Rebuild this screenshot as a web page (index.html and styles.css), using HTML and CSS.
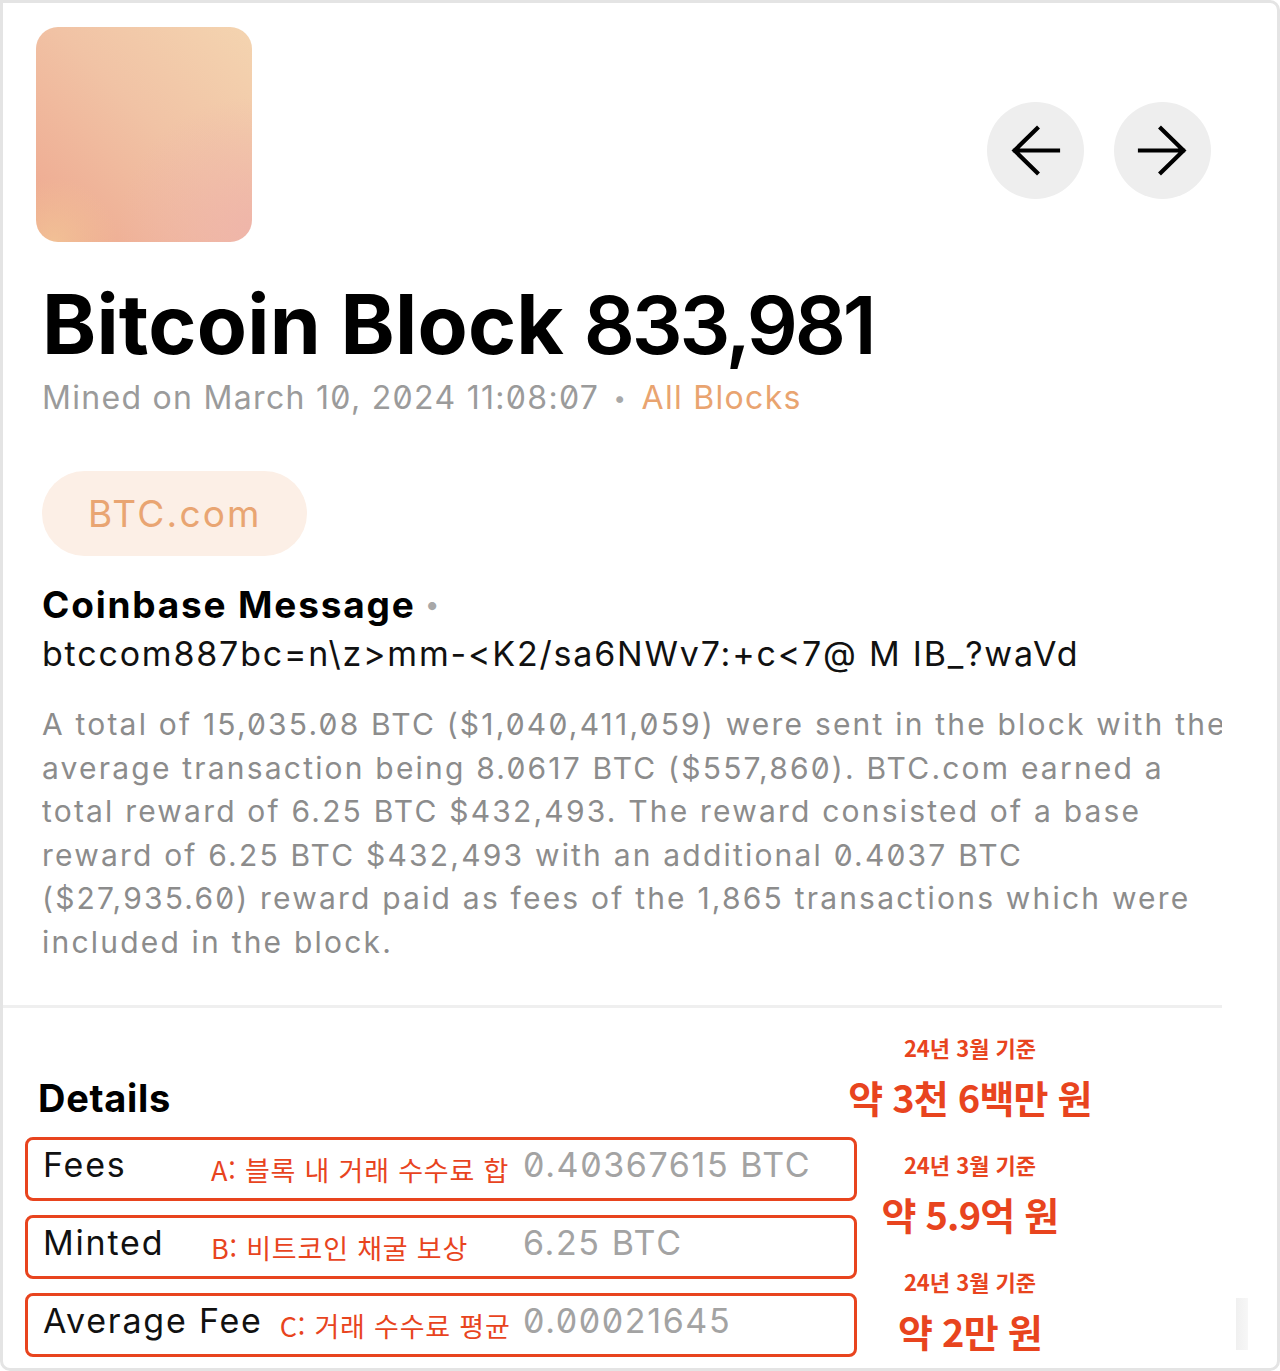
FILE: index.html
```html
<!DOCTYPE html>
<html lang="ko">
<head>
<meta charset="utf-8">
<title>Bitcoin Block 833,981</title>
<link rel="stylesheet" href="styles.css">
</head>
<body>
<div class="frame">
  <div class="top">
    <div class="block-art"></div>
    <div class="nav">
      <button class="nav-btn" aria-label="Previous block">
        <svg viewBox="0 0 97 97" width="97" height="97"><path d="M71 48.5H28M50 26.5L27.5 48.5L50 70.5" fill="none" stroke="#000" stroke-width="4.2" stroke-linecap="square" stroke-linejoin="miter"/></svg>
      </button>
      <button class="nav-btn" aria-label="Next block">
        <svg viewBox="0 0 97 97" width="97" height="97"><path d="M26 48.5H69M47 26.5L69.5 48.5L47 70.5" fill="none" stroke="#000" stroke-width="4.2" stroke-linecap="square" stroke-linejoin="miter"/></svg>
      </button>
    </div>
  </div>

  <div class="main">
    <h1 class="title">Bitcoin Block <span class="num">833,981</span></h1>
    <div class="sub">Mined on March 10, 2024 11:08:07 <span class="dot">•</span> <span class="link">All Blocks</span></div>

    <div class="pill">BTC.com</div>

    <h2 class="cb-title">Coinbase Message <span class="cb-dot">•</span></h2>
    <div class="cb-msg">btccom887bc=n\z&gt;mm-&lt;K2/sa6NWv7:+c&lt;7@ M IB_?waVd</div>

    <p class="summary">A total of 15,035.08 BTC ($1,040,411,059) were sent in the block with the<br>average transaction being 8.0617 BTC ($557,860). BTC.com earned a<br>total reward of 6.25 BTC $432,493. The reward consisted of a base<br>reward of 6.25 BTC $432,493 with an additional 0.4037 BTC<br>($27,935.60) reward paid as fees of the 1,865 transactions which were<br>included in the block.</p>
  </div>

  <div class="divider"></div>

  <div class="bottom">
    <div class="details">
      <h3 class="details-title">Details</h3>
      <div class="rows">
        <div class="row">
          <span class="label">Fees</span>
          <span class="note">A: 블록 내 거래 수수료 합</span>
          <span class="value">0.40367615 BTC</span>
        </div>
        <div class="row">
          <span class="label">Minted</span>
          <span class="note">B: 비트코인 채굴 보상</span>
          <span class="value">6.25 BTC</span>
        </div>
        <div class="row">
          <span class="label">Average Fee</span>
          <span class="note">C: 거래 수수료 평균</span>
          <span class="value">0.00021645</span>
        </div>
      </div>
    </div>
    <div class="krw">
      <div class="krw-group">
        <div class="krw-date">24년 3월 기준</div>
        <div class="krw-amount">약 3천 6백만 원</div>
      </div>
      <div class="krw-group">
        <div class="krw-date">24년 3월 기준</div>
        <div class="krw-amount">약 5.9억 원</div>
      </div>
      <div class="krw-group">
        <div class="krw-date">24년 3월 기준</div>
        <div class="krw-amount">약 2만 원</div>
      </div>
    </div>
    <div class="scroll-stub"></div>
  </div>
</div>
</body>
</html>
```

FILE: styles.css
```css
html, body {
  margin: 0;
  padding: 0;
  background: #ffffff;
}

body {
  font-family: Inter, "Noto Sans", "Noto Sans CJK KR", sans-serif;
  font-feature-settings: "zero" 1;
  color: #000;
}

.frame {
  width: 1280px;
  height: 1371px;
  box-sizing: border-box;
  border: 3px solid #e4e4e4;
  border-radius: 0 10px 10px 10px;
  overflow: hidden;
  background: #fff;
}

/* top row */
.top {
  display: flex;
  justify-content: space-between;
  align-items: flex-start;
  margin-top: 24px;
  padding-left: 33px;
  padding-right: 66px;
}

.block-art {
  width: 216px;
  height: 215px;
  border-radius: 22px;
  background:
    radial-gradient(circle at 8% 100%, rgba(242, 196, 150, 0.85) 0, rgba(242, 196, 150, 0) 22%),
    radial-gradient(circle at 100% 95%, rgba(239, 180, 170, 0.9) 0, rgba(239, 180, 170, 0) 45%),
    linear-gradient(225deg, #f4d4b0 0%, #f1c3a5 45%, #eea78f 100%);
}

.nav {
  display: flex;
  gap: 30px;
  margin-top: 75px;
}

.nav-btn {
  width: 97px;
  height: 97px;
  border: 0;
  padding: 0;
  border-radius: 50%;
  background: #eeeeee;
  display: flex;
  align-items: center;
  justify-content: center;
}

.nav-btn svg {
  display: block;
}

/* main text */
.main {
  padding-left: 39px;
}

.title {
  margin: 42px 0 0;
  font-size: 82px;
  line-height: 82px;
  font-weight: 700;
  letter-spacing: 0.2px;
  white-space: nowrap;
}

.title .num {
  font-size: 80px;
  font-weight: 600;
  letter-spacing: -3.2px;
}

.sub {
  margin-top: 14px;
  font-size: 32px;
  line-height: 36px;
  color: #9b9b9b;
  letter-spacing: 1.3px;
  white-space: nowrap;
}

.sub .dot {
  color: #a8a8a8;
  font-size: 22px;
  margin: 0 4px;
  vertical-align: 3px;
}

.sub .link {
  color: #e9a470;
}

.pill {
  display: inline-flex;
  align-items: center;
  box-sizing: border-box;
  height: 85px;
  margin-top: 55px;
  padding: 0 45px 0 46px;
  border-radius: 43px;
  background: #fcefe6;
  color: #e9a572;
  font-size: 37px;
  line-height: 44px;
  letter-spacing: 2.2px;
}

.cb-title {
  margin: 27px 0 0;
  font-size: 37px;
  line-height: 44px;
  font-weight: 700;
  letter-spacing: 1.8px;
}

.cb-dot {
  color: #a8a8a8;
  font-size: 26px;
  vertical-align: 4px;
}

.cb-msg {
  margin-top: 5px;
  font-size: 34px;
  line-height: 44px;
  color: #111;
  letter-spacing: 1.8px;
  white-space: nowrap;
}

.summary {
  margin: 27px 0 0;
  width: 1180px;
  overflow: hidden;
  white-space: nowrap;
  font-size: 30px;
  line-height: 43.5px;
  color: #8c8c8c;
  letter-spacing: 2.2px;
}

.divider {
  margin-top: 41px;
  width: 1219px;
  height: 3px;
  background: #efefef;
}

/* bottom */
.bottom {
  display: flex;
  align-items: flex-start;
}

.details {
  width: 832px;
  margin-left: 22px;
}

.details-title {
  margin: 67px 0 0 13px;
  font-size: 38px;
  line-height: 46px;
  font-weight: 700;
  letter-spacing: 0.7px;
}

.rows {
  margin-top: 16px;
  display: flex;
  flex-direction: column;
  gap: 14px;
}

.row {
  display: flex;
  align-items: center;
  box-sizing: border-box;
  height: 64px;
  border: 3.5px solid #e8441e;
  border-radius: 8px;
  padding-left: 15px;
}

.label {
  min-width: 151px;
  margin-right: 17px;
  margin-bottom: 8px;
  font-size: 34px;
  line-height: 40px;
  color: #111;
  letter-spacing: 1.8px;
  white-space: nowrap;
}

.note {
  flex: 1;
  font-family: "Noto Sans CJK KR", sans-serif;
  font-size: 27px;
  color: #e8441e;
  white-space: nowrap;
  letter-spacing: 0.8px;
}

.value {
  width: 331px;
  margin-bottom: 8px;
  font-size: 34px;
  line-height: 40px;
  color: #a3a3a3;
  letter-spacing: 1.6px;
  white-space: nowrap;
}

.krw {
  width: 220px;
  margin-left: 3px;
  margin-top: 28px;
  display: flex;
  flex-direction: column;
  gap: 37px;
  text-align: center;
  color: #e8441e;
  font-family: "Noto Sans CJK KR", sans-serif;
  font-weight: 700;
}

.krw-group {
  display: flex;
  flex-direction: column;
  align-items: center;
  gap: 20px;
}

.krw-date {
  font-size: 22px;
  line-height: 22px;
  white-space: nowrap;
}

.krw-amount {
  font-size: 38px;
  line-height: 38px;
  letter-spacing: -0.8px;
  white-space: nowrap;
}

.scroll-stub {
  margin-top: 290px;
  margin-left: 156px;
  width: 12px;
  height: 52px;
  background: linear-gradient(90deg, #f0f0f0, #f7f7f7);
}
```
